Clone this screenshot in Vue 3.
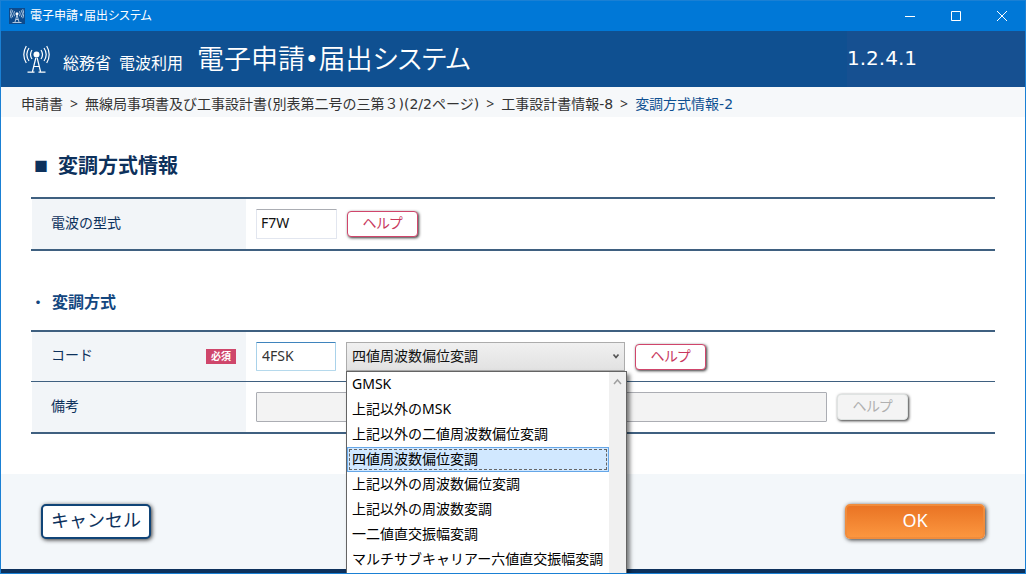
<script setup>
import { ref } from 'vue'

const options = [
  'GMSK',
  '上記以外のMSK',
  '上記以外の二値周波数偏位変調',
  '四値周波数偏位変調',
  '上記以外の周波数偏位変調',
  '上記以外の周波数変調',
  '一二値直交振幅変調',
  'マルチサブキャリアー六値直交振幅変調',
]
const trail = [
  '申請書',
  '無線局事項書及び工事設計書(別表第二号の三第３)(2/2ページ)',
  '工事設計書情報-8',
]
const selected = ref('四値周波数偏位変調')
const waveType = ref('F7W')
const code = ref('4FSK')
const remark = ref('')
</script>

<template>
  <div class="window">
    <div class="titlebar">
      <span class="app-icon">
        <svg viewBox="0 0 28 28" width="14" height="14" fill="none" stroke="#d5e6f5" stroke-width="1.6">
          <circle cx="14" cy="9.500" r="3" fill="#fff" stroke="none" />
          <path d="M14 12 10 26M14 12l4 14M5 27h18M11.500 21h5M9 4.500q-3 5 0 10M5.500 2.500q-5 7 0 14M2.500 0.500q-5 9 0 18M19 4.500q3 5 0 10M22.500 2.500q5 7 0 14M25.500 0.500q5 9 0 18" />
        </svg>
      </span>
      <span class="window-title">電子申請・届出システム</span>
      <div class="window-controls">
        <button type="button" aria-label="最小化">
          <svg width="12" height="12" viewBox="0 0 12 12"><path d="M1 6.500h10" /></svg>
        </button>
        <button type="button" aria-label="最大化">
          <svg width="12" height="12" viewBox="0 0 12 12"><path d="M1.500 1.500h9v9h-9z" /></svg>
        </button>
        <button type="button" aria-label="閉じる">
          <svg width="12" height="12" viewBox="0 0 12 12"><path d="M1 1l10 10M11 1L1 11" /></svg>
        </button>
      </div>
    </div>

    <header class="banner">
      <svg class="logo" width="28" height="28" viewBox="0 0 28 28" fill="none" stroke="#fff" stroke-width="1.2">
        <circle cx="14.500" cy="9.500" r="3" fill="#fff" stroke="none" />
        <path d="M13.800 13 10.500 26.500M15.200 13l3.300 13.500M5.500 27.200h7M16.500 27.200h7M12 21.500h5" />
        <path d="M10 5q-3 4.500 0 9M7 3q-4.400 6.500 0 13M4.300 1q-5 8.500 0 17M19 5q3 4.500 0 9M22 3q4.400 6.500 0 13M24.700 1q5 8.500 0 17" />
      </svg>
      <span class="ministry"><span>総務省</span><span>電波利用</span></span>
      <h1>電子申請<span class="dot">・</span>届出システム</h1>
      <span class="version">1.2.4.1</span>
    </header>

    <nav class="trail" aria-label="現在位置">
      <template v-for="item in trail" :key="item">
        <span>{{ item }}</span><span class="sep">&gt;</span>
      </template>
      <span class="current">変調方式情報-2</span>
    </nav>

    <main>
      <h2><span class="mark">■</span>変調方式情報</h2>
      <section class="fields">
        <div class="row">
          <div class="name"><label for="wave">電波の型式</label></div>
          <div class="value">
            <input id="wave" v-model="waveType" class="box short plain" type="text" />
            <button class="help" type="button">ヘルプ</button>
          </div>
        </div>
      </section>

      <h3><span class="mark">・</span>変調方式</h3>
      <section class="fields">
        <div class="row code-row">
          <div class="name">
            <label for="code">コード</label><span class="required">必須</span>
          </div>
          <div class="value">
            <input id="code" v-model="code" class="box active" type="text" />
            <div class="combo">
              <select v-model="selected" aria-label="コード名称">
                <option v-for="o in options" :key="o">{{ o }}</option>
              </select>
              <svg class="arrow" width="8" height="8" viewBox="0 0 8 8"><path d="M1.500 2.500 4 5.500l2.500-3" /></svg>
              <div class="popup">
                <ul role="listbox" aria-label="コード名称">
                  <li
                    v-for="o in options"
                    :key="o"
                    role="option"
                    :aria-selected="o === selected"
                    :class="{ chosen: o === selected }"
                    @click="selected = o"
                  >{{ o }}</li>
                </ul>
                <div class="scroll">
                  <svg width="9" height="8" viewBox="0 0 9 8"><path d="M1 6 4.500 2 8 6" /></svg>
                </div>
              </div>
            </div>
            <button class="help" type="button">ヘルプ</button>
          </div>
        </div>
        <div class="row">
          <div class="name"><label for="remark">備考</label></div>
          <div class="value">
            <input id="remark" v-model="remark" class="box long" type="text" disabled />
            <button class="help" type="button" disabled>ヘルプ</button>
          </div>
        </div>
      </section>
    </main>

    <footer>
      <button class="cancel" type="button">キャンセル</button>
      <button class="ok" type="button">OK</button>
    </footer>
  </div>
</template>

<style>
body {
  margin: 0;
}
</style>

<style scoped>
.window,
.window * {
  box-sizing: border-box;
}
.window {
  display: flex;
  flex-direction: column;
  height: 100vh;
  overflow: hidden;
  border: 1px solid #1a80d4;
  background: #fff;
  color: #333;
  font: 14px/20px "Noto Sans", "Noto Sans CJK JP", sans-serif;
}
button,
input,
select {
  margin: 0;
  font: inherit;
}
h1,
h2,
h3,
ul {
  margin: 0;
  padding: 0;
}
.titlebar {
  display: flex;
  flex: none;
  align-items: center;
  height: 30px;
  padding-left: 8px;
  background: #0078d7;
  color: #fff;
}
.app-icon {
  display: flex;
  align-items: center;
  justify-content: center;
  width: 16px;
  height: 16px;
  background: #0d4a8c;
}
.window-title {
  margin-left: 5px;
  font-size: 12px;
  font-feature-settings: "palt";
}
.window-controls {
  display: flex;
  align-self: stretch;
  margin-left: auto;
}
.window-controls button {
  display: flex;
  align-items: center;
  justify-content: center;
  width: 46px;
  padding: 0;
  border: 0;
  background: none;
}
.window-controls path {
  fill: none;
  stroke: #fff;
}
.banner {
  display: flex;
  flex: none;
  align-items: center;
  height: 56px;
  padding-left: 21px;
  background: #0f5091;
  color: #fff;
}
.ministry {
  display: flex;
  gap: 8px;
  margin: 8px 0 0 13px;
  font-size: 16px;
}
h1 {
  margin-left: 14px;
  font-size: 27px;
  font-weight: 350;
  line-height: 40px;
  font-feature-settings: "palt";
}
.dot {
  font-weight: 700;
}
.version {
  width: 178px;
  margin-left: auto;
  font: 20px/54px "DejaVu Sans", sans-serif;
  align-self: stretch;
  background: #165091;
}
.trail {
  display: flex;
  flex: none;
  align-items: center;
  gap: 7px;
  height: 30px;
  padding: 4px 20px 0;
  background: #f6f8fa;
  font-family: "DejaVu Sans", "Noto Sans CJK JP", sans-serif;
  white-space: nowrap;
}
.sep {
  font-family: "Noto Sans", sans-serif;
}
.current {
  color: #0f5091;
}
main {
  flex: none;
  padding: 37px 30px 40px;
}
h2 {
  display: flex;
  align-items: center;
  height: 24px;
  margin-bottom: 19px;
  padding-left: 3px;
  color: #0d315c;
  font-size: 20px;
  line-height: 24px;
}
h2 .mark {
  width: 24px;
  font-size: 14px;
}
h3 {
  display: flex;
  align-items: center;
  height: 24px;
  margin: 39px 0 16px;
  color: #13477f;
  font-size: 16px;
  line-height: 24px;
}
h3 .mark {
  width: 21px;
  font-size: 14px;
}
.fields {
  border-top: 2px solid #3f6080;
  border-bottom: 2px solid #3f6080;
}
.row {
  display: flex;
  height: 50px;
}
.code-row {
  height: 49px;
}
.row + .row {
  height: 51px;
  border-top: 1px solid #3f6080;
}
.name {
  display: flex;
  flex: none;
  align-items: center;
  justify-content: space-between;
  width: 214px;
  margin-left: 1px;
  padding: 0 10px 0 19px;
  background: #f2f5f8;
  color: #0d315c;
}
.name label {
  padding-bottom: 3px;
}
.required {
  width: 30px;
  background: #cf466b;
  color: #fff;
  font-size: 10px;
  font-weight: 700;
  line-height: 15px;
  text-align: center;
}
.value {
  display: flex;
  flex: 1;
  align-items: center;
  gap: 10px;
  min-width: 0;
  padding-left: 10px;
}
.box {
  height: 30px;
  padding: 0 4px 4px;
  border: 1px solid #e2e6ef;
  border-radius: 1px;
  background: #fff;
  color: #111;
}
.short {
  width: 81px;
}
.plain {
  border-top-color: #abadb3;
}
.active {
  width: 80px;
  height: 29px;
  border-color: #3f84bd #a9d2ea #b5d9ec;
  padding: 0 5px 2px;
  color: #333;
}
.long {
  flex: 0 1 571px;
  min-width: 0;
  border-color: #abadb3;
  background: #f3f3f3;
}
.combo {
  position: relative;
  width: 279px;
}
select {
  display: block;
  width: 100%;
  height: 29px;
  padding: 0 5px 2px;
  appearance: none;
  border: 1px solid #acacac;
  border-radius: 0;
  background: linear-gradient(#f0f0f0, #e2e2e2);
  color: #111;
}
.arrow {
  position: absolute;
  top: 10px;
  right: 5px;
  pointer-events: none;
}
.arrow path {
  fill: none;
  stroke: #555;
  stroke-width: 1.7;
}
.popup {
  position: absolute;
  top: 29px;
  left: 0;
  z-index: 1;
  display: flex;
  width: 281px;
  height: 240px;
  border: 1px solid #646464;
  background: #fff;
  box-shadow: 3px 3px 4px rgba(0, 0, 0, 0.5);
}
ul {
  flex: 1;
  list-style: none;
}
li {
  height: 25px;
  padding-left: 4px;
  border: 1px solid transparent;
  color: #000;
  line-height: 22px;
  white-space: nowrap;
}
.chosen {
  border-color: #66a7e8;
  background: #d1e8ff;
  outline: 1px dashed #666;
  outline-offset: -3px;
}
.scroll {
  flex: none;
  width: 17px;
  padding-top: 5px;
  background: #f0f0f0;
  line-height: 8px;
  text-align: center;
}
.scroll path {
  fill: none;
  stroke: #a0a0a0;
  stroke-width: 1.5;
}
.help {
  width: 71px;
  height: 26px;
  padding: 0 0 2px;
  border: 1px solid #d0456b;
  border-radius: 4px;
  background: #fff;
  box-shadow: 1px 1px 3px rgba(0, 0, 0, 0.8);
  color: #c8385e;
  font-feature-settings: "palt";
  line-height: 22px;
}
.help:disabled {
  border-color: #dfe3e2;
  background: #f4f4f4;
  color: #b0b0b0;
}
footer {
  display: flex;
  flex: 1 0 auto;
  align-items: flex-start;
  justify-content: space-between;
  padding: 30px 40px;
  border-bottom: 4px solid #0d315c;
  background: #f3f7fa;
}
footer button {
  height: 35px;
  padding: 0 0 4px;
  border-radius: 5px;
  box-shadow: 1px 1px 4px rgba(0, 0, 0, 0.8);
  font-size: 18px;
  line-height: 26px;
}
.cancel {
  width: 110px;
  border: 2px solid #104477;
  background: #fff;
  color: #0d315c;
}
.ok {
  width: 140px;
  border: 2px solid #f08c3c;
  background: linear-gradient(#ea7424, #fb963f);
  color: #fff;
}
</style>
